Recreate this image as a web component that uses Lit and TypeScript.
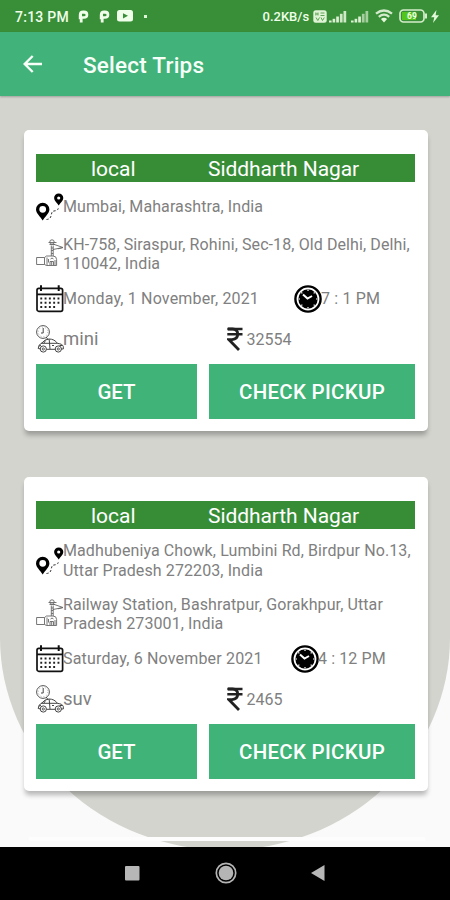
import { LitElement, html, css, svg } from "lit";
import { customElement, property } from "lit/decorators.js";
import { classMap } from "lit/directives/class-map.js";

interface Trip {
  kind: string;
  name: string;
  from: string[];
  to: string[];
  date: string;
  time: string;
  car: string;
  fare: string;
}

const trips: Trip[] = [
  {
    kind: "local",
    name: "Siddharth Nagar",
    from: ["Mumbai, Maharashtra, India"],
    to: ["KH-758, Siraspur, Rohini, Sec-18, Old Delhi, Delhi,", "110042, India"],
    date: "Monday, 1 November, 2021",
    time: "7 : 1 PM",
    car: "mini",
    fare: "32554",
  },
  {
    kind: "local",
    name: "Siddharth Nagar",
    from: ["Madhubeniya Chowk, Lumbini Rd, Birdpur No.13,", "Uttar Pradesh 272203, India"],
    to: ["Railway Station, Bashratpur, Gorakhpur, Uttar", "Pradesh 273001, India"],
    date: "Saturday, 6 November 2021",
    time: "4 : 12 PM",
    car: "suv",
    fare: "2465",
  },
];

const routeIcon = svg`<svg width="28" height="28" viewBox="0 0 28 28">
  <path fill="#000" fill-rule="evenodd" d="M6.700 9.800a6.700 6.700 0 0 1 6.700 6.700c0 3.700-4.200 7-6.700 10.900C4.200 23.500 0 20.200 0 16.500a6.700 6.700 0 0 1 6.700-6.700zM6.700 12.900a3.400 3.400 0 1 0 0 6.800a3.400 3.400 0 0 0 0-6.800z"/>
  <path fill="#000" fill-rule="evenodd" d="M22.700.4a4.600 4.600 0 0 1 4.600 4.600c0 2.700-2.900 4.900-4.600 7.500c-1.700-2.600-4.600-4.800-4.600-7.500A4.600 4.600 0 0 1 22.700.4zM22.700 3.400a1.600 1.600 0 1 0 0 3.200a1.600 1.600 0 0 0 0-3.200z"/>
  <path d="M10.500 26.500C17.500 26 13.500 18.500 18 18C21.500 17.600 22.300 16.500 22.500 14" fill="none" stroke="#333" stroke-width="1" stroke-dasharray="2.200 1.700"/></svg>`;

const dropIcon = svg`<svg width="28" height="28" viewBox="0 0 28 28"><g fill="none" stroke="#666" stroke-width=".9">
  <path d="M.6 18.500H8.500V25.500H.6zM8.500 18.500L10.500 17H17Q20.600 17 20.600 20.500V26.500H10.500L8.500 25.500M11 18.500V26.500M12.500 23.500V20M14 26V22.500H17.500V26M15.700 22.500V26M14.500 20Q16 18 17.500 20M19 21V26"/>
  <path d="M15.300 17V6.500M17.200 17V6.500M15.300 14.500H17.200M15.300 11.500H17.200M15.300 9H17.200M17 5L27 8.500L17 10.500M27 8.500L22 9.800"/>
  <circle cx="16" cy="3" r="2.200"/><path d="M12.500 3.500H20.500M13.500 5.500H19"/></g></svg>`;

const calendarIcon = svg`<svg width="28" height="28" viewBox="0 0 28 28">
  <rect x="1" y="3.300" width="25.600" height="23" rx="1.800" fill="none" stroke="#111" stroke-width="1.700"/>
  <path d="M1 9.400H26.600" stroke="#111" stroke-width="1.800"/>
  <path d="M5 .3V6M22.700 .3V6" stroke="#111" stroke-width="2"/>
  <path d="M4.300 13.500H23.800M4.300 17.700H23.800M4.300 22H20" stroke="#222" stroke-width="1.900" stroke-dasharray="1.900 2.400"/></svg>`;

const carIcon = svg`<svg width="28" height="28" viewBox="0 0 28 28"><g fill="none" stroke="#555" stroke-width="1">
  <circle cx="7" cy="7" r="6.400"/><circle cx="7" cy="7" r="4.800" stroke="#aaa" stroke-dasharray="1 2"/><path d="M7.200 3V8H5M10 12L12 14.500" stroke="#444"/>
  <path d="M4 23.800L2.200 23.500Q2.300 19.500 5.500 18.300Q9 14 13 14Q18.500 14 21.500 18.400Q26.500 18.800 27.300 21.500V24H25.200M10.600 24.300H19.300M5 18.300H21.500M13.200 14.300L14 24M9.500 15.500L7.800 18.300M16 20.500H18M3 21L5 20.500M23.500 20.500H26.500" stroke="#444"/>
  <circle cx="7.300" cy="24" r="3.100" stroke="#444"/><circle cx="22.300" cy="24" r="3.100" stroke="#444"/>
  <circle cx="7.300" cy="24" r="1.100"/><circle cx="22.300" cy="24" r="1.100"/></g></svg>`;

const clockIcon = svg`<svg width="28" height="28" viewBox="0 0 28 28">
  <circle cx="14" cy="14" r="12.600" fill="#fff" stroke="#000" stroke-width="2.400"/><circle cx="14" cy="14" r="9.700" fill="#000"/>
  <path d="M14 4.500V6M14 22V23.500M4.500 14H6M22 14H23.500M7.300 7.300L8.300 8.300M20.700 7.300L19.700 8.300M7.300 20.700L8.300 19.700M20.700 20.700L19.700 19.700" stroke="#fff" stroke-width="1.200"/>
  <path d="M9 9.500L13.500 13.500L18 11" fill="none" stroke="#fff" stroke-width="2"/></svg>`;

const rupeeIcon = svg`<svg width="16" height="24" viewBox="0 0 16 24"><g fill="none" stroke="#222" stroke-width="2.800">
  <path d="M.3 2H15.500M.3 7.300H15.500" stroke-width="2.500"/><path d="M1 2H5.500Q10.700 2.300 10.700 7Q10.700 12.200 5 12.600H1.800L12 23"/></g></svg>`;

@customElement("trip-card")
class TripCard extends LitElement {
  @property({ attribute: false }) trip!: Trip;
  static styles = css`
    :host { display: block; box-sizing: border-box; width: 404px; padding: 23.500px 12.500px 12px; background: #fff; border-radius: 5px; box-shadow: 0 5px 5px -1px rgba(0,0,0,.27); color: #808080; }
    .banner { height: 28px; background: #378d36; color: #fff; display: flex; align-items: center; font-size: 21px; line-height: 28px; padding-left: 55px; }
    .kind { width: 117px; padding-top: 2px; }
    .name { padding-top: 2px; white-space: nowrap; letter-spacing: -.08px; }
    .row { display: flex; align-items: center; min-height: 28px; margin-top: 11.500px; white-space: nowrap; font-size: 16px; }
    svg { display: block; flex: none; }
    .row svg:first-child { margin-right: -1px; }
    .address { padding: 1px 0; line-height: 19.500px; letter-spacing: .1px; }
    .to .address { padding: 2px 0 0; }
    .date { width: 230.500px; letter-spacing: .17px; padding-bottom: 1.500px; }
    .late .date { width: 227.500px; }
    .time { letter-spacing: .15px; padding-bottom: 1.500px; margin-left: -.5px; }
    .late .time { letter-spacing: .1px; }
    .car { width: 163.500px; font-size: 18.500px; }
    .fare { padding-left: 4px; padding-top: 1px; }
    .buttons { display: grid; grid-template-columns: 161px 206px; gap: 12px; margin-top: 11.500px; }
    button { all: unset; box-sizing: border-box; height: 54.500px; background: #40b378; color: #fff; font-size: 20.500px; font-weight: 500; text-align: center; padding-top: 2px; white-space: nowrap; }
    .check { letter-spacing: .28px; }
  `;
  render() {
    const t = this.trip;
    const late = t.time.length > 8;
    return html`
      <div class="banner"><span class="kind">${t.kind}</span><span class="name">${t.name}</span></div>
      <div class="row">${routeIcon}<div class="address">${t.from.map((l) => html`<div>${l}</div>`)}</div></div>
      <div class="row to">${dropIcon}<div class="address">${t.to.map((l) => html`<div>${l}</div>`)}</div></div>
      <div class=${classMap({ row: true, late })}>${calendarIcon}<span class="date">${t.date}</span>${clockIcon}<span class="time">${t.time}</span></div>
      <div class="row">${carIcon}<span class="car">${t.car}</span>${rupeeIcon}<span class="fare">${t.fare}</span></div>
      <div class="buttons"><button>GET</button><button class="check">CHECK PICKUP</button></div>
    `;
  }
}

const payIcon = svg`<svg width="11" height="13" viewBox="0 0 11 13"><path fill="#f0ffe9" fill-rule="evenodd" d="M.8 5Q.8.6 5.200.6H6Q10.300.6 10.300 4.700Q10.300 8.700 6 8.700H4.600V12.500H1.800V9.200H.8zM4 3.700V6.300H6Q7.600 6.200 7.600 4.900Q7.600 3.700 6 3.700z"/></svg>`;
const signalIcon = (last: string) => svg`<svg width="18" height="13" viewBox="0 0 18 13"><g fill="#dcf1d3">
  <rect x="0" y="10.500" width="2.600" height="2"/><rect x="3.600" y="8.800" width="2.600" height="3.700"/><rect x="7.200" y="6.500" width="2.700" height="6"/></g>
  <g fill=${last}><rect x="10.900" y="3.800" width="2.700" height="8.700"/><rect x="14.500" y="1" width="2.700" height="11.500"/></g></svg>`;

@customElement("app-root")
class AppRoot extends LitElement {
  static styles = css`
    :host { display: flex; flex-direction: column; position: relative; width: 450px; height: 900px; overflow: hidden; background: #fafafa; font-family: Roboto, sans-serif; }
    svg { display: block; flex: none; }
    .status { height: 32px; flex: none; background: #398e38; color: #efffe8; display: flex; align-items: center; font-size: 14px; font-weight: 500; padding-left: 15px; white-space: nowrap; }
    .clock { width: 63px; letter-spacing: .25px; padding-top: 1px; }
    .pay { margin-right: 9.500px; }
    .video { margin-left: -2px; }
    .dot { width: 3px; height: 3px; background: #e0f4d8; margin: 0 115.500px 0 11px; }
    .speed { width: 50px; font-size: 13px; padding-top: 1px; }
    .s1 { margin-left: 2px; } .s2 { margin-left: 4.500px; } .wifi { margin-left: 5.500px; } .bat { margin-left: 6px; } .bolt { margin-left: 4px; }
    .bar { height: 64px; flex: none; background: #41b279; color: #f6fff8; display: flex; align-items: center; padding-left: 23px; box-shadow: 0 1px 2px rgba(0,0,0,.25); position: relative; z-index: 1; }
    .title { margin-left: 40px; font-size: 22.500px; letter-spacing: .22px; font-weight: 500; padding-top: 2px; white-space: nowrap; }
    .page { flex: 1; min-height: 0; overflow: hidden; position: relative; }
    .backdrop { position: absolute; left: 0; top: 0; width: 450px; height: 754px; background: #d3d4ce; border-radius: 0 0 225px 225px / 0 0 212px 212px; }
    .list { position: relative; display: flex; flex-direction: column; gap: 46.500px; padding: 34px 0 0 23.500px; }
    .next { width: 396px; height: 4px; margin-left: 5px; background: #fdfdfd; }
    .nav { height: 53.500px; flex: none; background: #000; display: flex; align-items: center; padding-left: 125px; }
    .home { margin-left: 75px; } .back { margin-left: 74px; }
  `;
  render() {
    return html`
      <div class="status">
        <span class="clock">7:13 PM</span>
        <span class="pay">${payIcon}</span><span class="pay">${payIcon}</span>
        <svg class="video" width="16" height="12" viewBox="0 0 16 12"><rect width="16" height="11.500" rx="2.500" fill="#f0ffe9"/><path d="M6 3.200L11 5.800L6 8.400z" fill="#398e38"/></svg>
        <span class="dot"></span>
        <span class="speed">0.2KB/s</span>
        <svg width="14" height="13" viewBox="0 0 14 13"><rect x=".3" y=".3" width="13.400" height="12.400" rx="2.500" fill="#dff3d5"/><path d="M2.800 2.500V5.500M5 2.500V5.500M3 4H5M7.500 3H11.500M7.500 5.500H11.500M3 7.500L4.800 10.500L6.500 7.500M8 7.500L9.500 10.500L11.300 7.500" fill="none" stroke="#5da354" stroke-width="1"/></svg>
        <span class="s1">${signalIcon("#cfe9c6")}</span><span class="s2">${signalIcon("#a6cfa0")}</span>
        <svg class="wifi" width="18" height="14" viewBox="0 0 18 14"><path d="M9 13.500L5.900 9.900Q9 7.500 12.100 9.900z" fill="#e6f8dc"/><path d="M3.800 7.800Q9 3.500 14.200 7.800M1 4.700Q9-1.700 17 4.700" fill="none" stroke="#d3ebcb" stroke-width="2.300"/></svg>
        <svg class="bat" width="28" height="14" viewBox="0 0 28 14"><rect x="1" y="1" width="24" height="12" rx="3.500" fill="none" stroke="#d4edca" stroke-width="1.700"/><rect x="26" y="4.500" width="2" height="5" fill="#d4edca"/><path d="M3 3H17V11H3z" fill="#54c51b"/><text x="13" y="10" text-anchor="middle" font-family="Roboto, sans-serif" font-size="8.500" font-weight="700" fill="#f1ffe9">69</text></svg>
        <svg class="bolt" width="8" height="13" viewBox="0 0 8 13"><path d="M5.500 0L0 7.200H3.300L2 13L8 5.200H4.600z" fill="#e4f8da"/></svg>
      </div>
      <div class="bar">
        <svg width="20" height="18" viewBox="0 0 20 18"><path d="M19 9H2M9.700 1L1.700 9L9.700 17" fill="none" stroke="#f6fff8" stroke-width="2.400"/></svg>
        <span class="title">Select Trips</span>
      </div>
      <div class="page">
        <div class="backdrop"></div>
        <div class="list">${trips.map((t) => html`<trip-card .trip=${t}></trip-card>`)}<div class="next"></div></div>
      </div>
      <div class="nav">
        <svg width="15" height="15" viewBox="0 0 15 15"><rect width="14.500" height="14.500" rx="1" fill="#b7b7b7"/></svg>
        <svg class="home" width="22" height="22" viewBox="0 0 22 22"><circle cx="11" cy="11" r="9.700" fill="none" stroke="#b5b5b5" stroke-width="1.700"/><circle cx="11" cy="11" r="7.300" fill="#b5b5b5"/></svg>
        <svg class="back" width="14" height="16" viewBox="0 0 14 16"><path d="M13.500 0V16L0 8z" fill="#b7b7b7"/></svg>
      </div>
    `;
  }
}
